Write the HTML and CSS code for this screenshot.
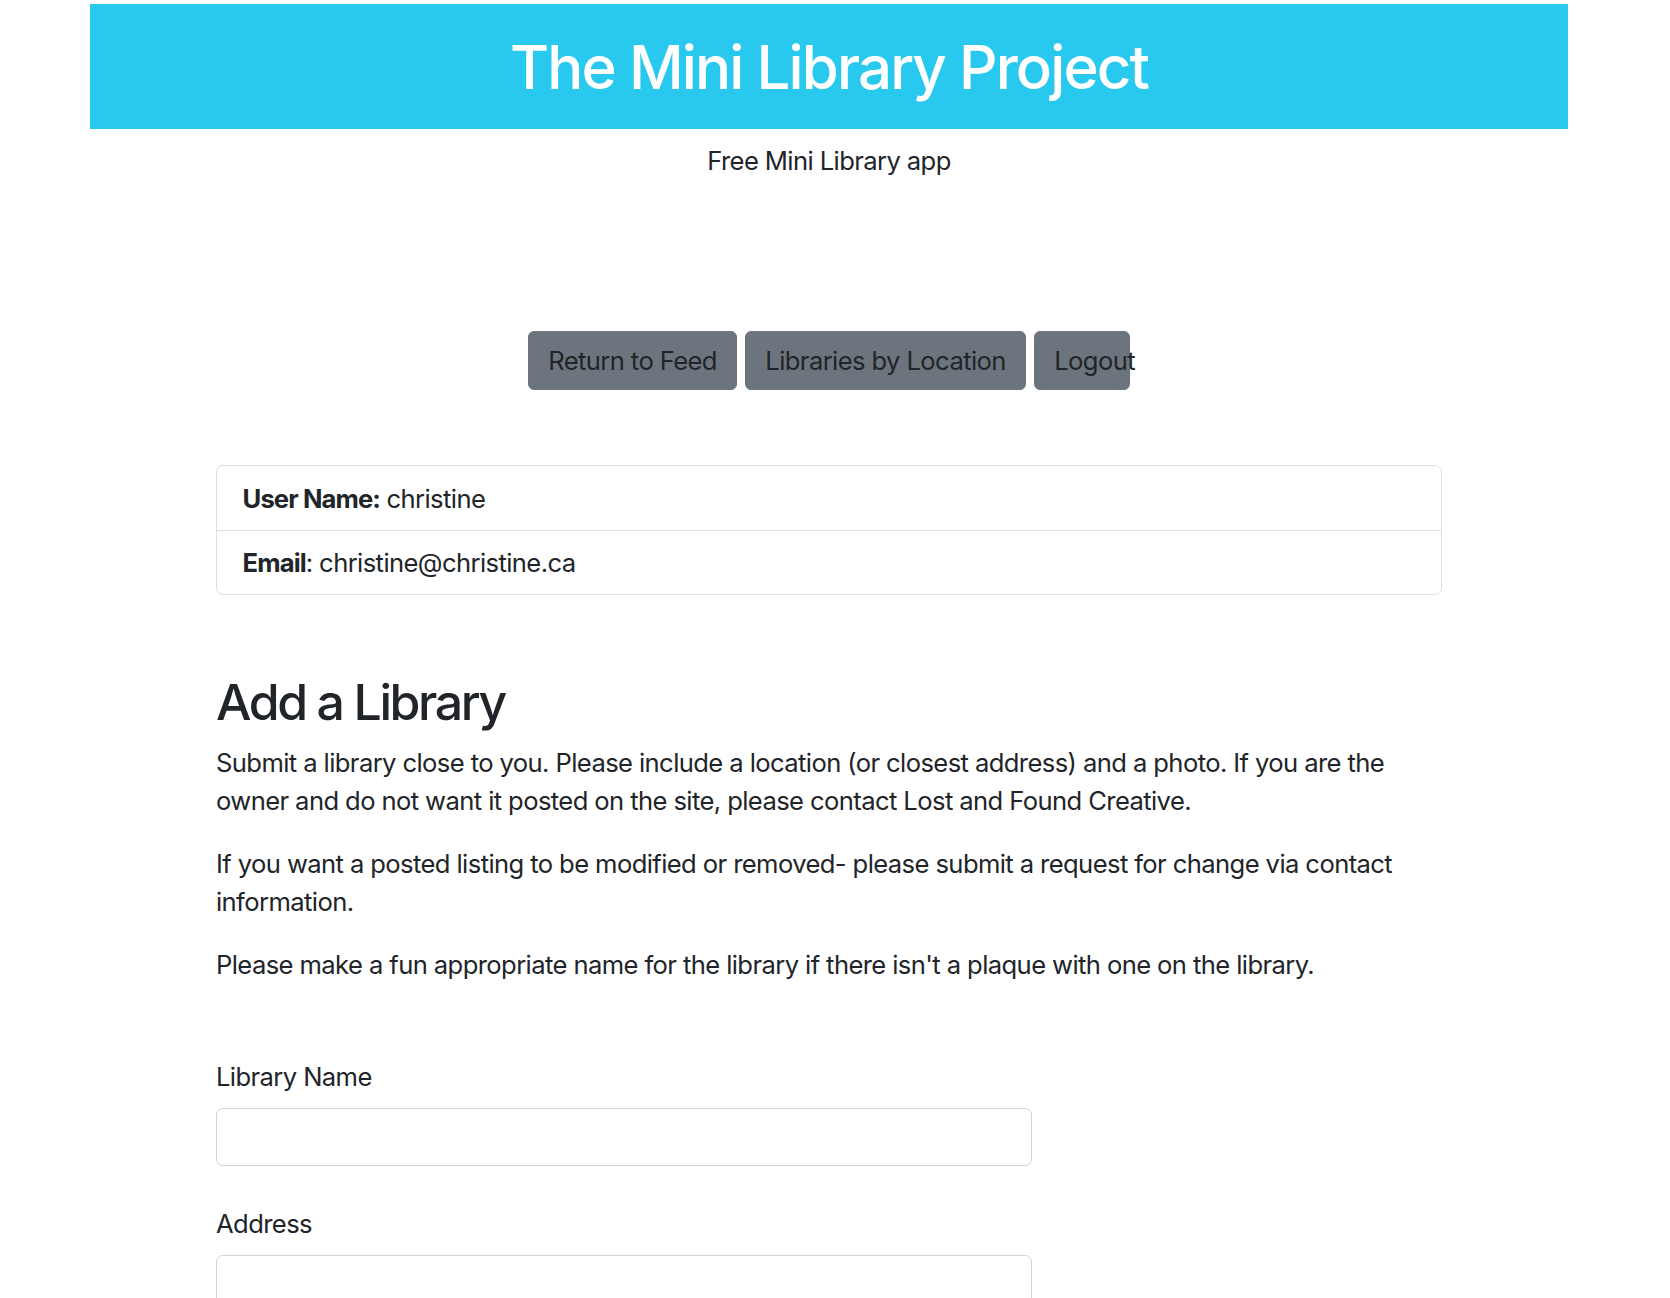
FILE: index.html
```html
<!DOCTYPE html>
<html lang="en">
<head>
<meta charset="utf-8">
<title>The Mini Library Project</title>
<link rel="stylesheet" href="styles.css">
</head>
<body>
<div class="page">
  <header class="banner">
    <h1 class="banner-title">The Mini Library Project</h1>
  </header>
  <p class="tagline">Free Mini Library app</p>
  <nav class="actions">
    <a class="btn" href="#">Return to Feed</a>
    <a class="btn" href="#">Libraries by Location</a>
    <a class="btn btn-narrow" href="#">Logout</a>
  </nav>
  <main class="content">
    <ul class="info">
      <li class="info-item"><strong>User Name:</strong> christine</li>
      <li class="info-item"><strong>Email</strong>: christine@christine.ca</li>
    </ul>
    <h2 class="section-title">Add a Library</h2>
    <p class="text">Submit a library close to you. Please include a location (or closest address) and a photo. If you are the owner and do not want it posted on the site, please contact Lost and Found Creative.</p>
    <p class="text">If you want a posted listing to be modified or removed- please submit a request for change via contact information.</p>
    <p class="text">Please make a fun appropriate name for the library if there isn't a plaque with one on the library.</p>
    <form class="form">
      <div class="field">
        <label class="label" for="name">Library Name</label>
        <input class="input" id="name" type="text">
      </div>
      <div class="field">
        <label class="label" for="address">Address</label>
        <input class="input" id="address" type="text">
      </div>
    </form>
  </main>
</div>
</body>
</html>
```

FILE: styles.css
```css
* { box-sizing: border-box; }
html, body { margin: 0; padding: 0; background: #fff; }
body {
  font-family: Inter, "Noto Sans", sans-serif;
  font-size: 25.6px;
  line-height: 1.5;
  letter-spacing: -0.6px;
  color: #212529;
}
.page {
  margin: 0 0 0 90px;
  width: 1478px;
  padding-top: 4px;
}
.banner {
  background: #29c9ef;
  height: 125px;
  display: flex;
  align-items: center;
  justify-content: center;
}
.banner-title {
  margin: 0;
  color: #fff;
  font-weight: 500;
  font-size: 60px;
  line-height: 1.2;
  letter-spacing: -1.9px;
}
.tagline {
  margin: 13px 0 0;
  text-align: center;
  line-height: 38px;
}
.actions {
  margin-top: 151px;
  display: flex;
  justify-content: center;
  gap: 8px;
}
.btn {
  display: inline-block;
  height: 59px;
  padding: 9.6px 19.2px;
  line-height: 38.4px;
  background: #6c757d;
  border: 1px solid #6c757d;
  border-radius: 6px;
  color: #212529;
  text-decoration: none;
  white-space: nowrap;
}
.btn-narrow { width: 96px; overflow: visible; }
.content {
  padding: 0 126px;
}
.info {
  list-style: none;
  margin: 75px 0 0;
  padding: 0;
  border: 1px solid #dfdfdf;
  border-radius: 7px;
}
.info-item {
  padding: 13.5px 25.6px 12.1px;
  line-height: 38px;
}
.info-item + .info-item { border-top: 1px solid #dfdfdf; }
.info-item strong { font-weight: 700; letter-spacing: -0.9px; }
.section-title {
  margin: 77px 0 11.8px;
  font-size: 50px;
  line-height: 1.2;
  font-weight: 500;
  letter-spacing: -2.4px;
}
.text {
  margin: 0 0 26px;
  line-height: 37.6px;
}
.form { margin-top: 74px; }
.field {
  display: flex;
  flex-direction: column;
  align-items: flex-start;
  margin-bottom: 39px;
}
.label {
  line-height: 38px;
  margin-bottom: 12px;
}
.input {
  width: 816px;
  height: 58px;
  border: 1px solid #ced4da;
  border-radius: 7px;
  font: inherit;
  padding: 0 19px;
  background: #fff;
}
```
